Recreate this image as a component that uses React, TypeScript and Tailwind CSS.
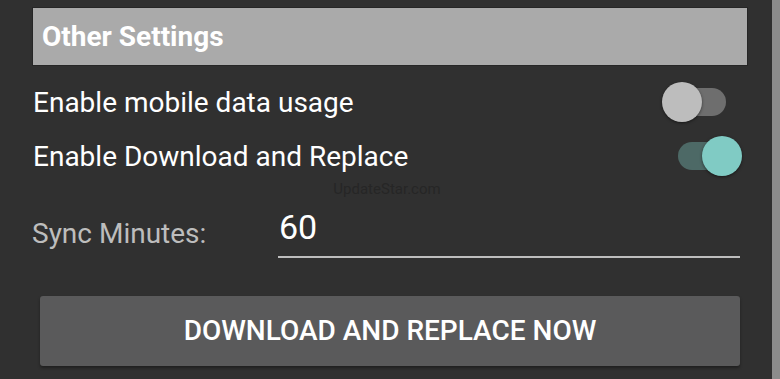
import React from 'react';

const Switch = ({ on }: { on: boolean }) => (
  <div className="relative w-[80px] h-[40px]">
    <div
      className={
        on
          ? 'absolute left-[16px] top-[6px] w-[48px] h-[28px] rounded-full bg-[#4d6966]'
          : 'absolute left-[16px] top-[6px] w-[48px] h-[28px] rounded-full bg-[#6e6e6e]'
      }
    />
    <div
      className={
        on
          ? 'absolute left-[40px] top-0 w-[40px] h-[40px] rounded-full bg-[#80cbc4] shadow-[0_1px_3px_rgba(0,0,0,0.5)]'
          : 'absolute left-0 top-0 w-[40px] h-[40px] rounded-full bg-[#bdbdbd] shadow-[0_1px_3px_rgba(0,0,0,0.5)]'
      }
    />
  </div>
);

const SettingRow = ({ label, on }: { label: string; on: boolean }) => (
  <div className="flex items-center justify-between h-[44px] pl-px pr-[6px]">
    <span className="text-[28px] text-white leading-none pt-[2px]">{label}</span>
    <Switch on={on} />
  </div>
);

export default function App() {
  return (
    <div
      className="flex w-[780px] h-[379px] bg-[#303030] overflow-hidden"
      style={{ fontFamily: 'Roboto, "Noto Sans", sans-serif' }}
    >
      <div className="flex-1 flex flex-col pl-[32px] pr-[24px]">
        <div className="mt-[7px] h-[59px] bg-[#aaaaaa] border border-[#262626] flex items-center pl-[9px]">
          <span className="text-[28px] font-bold text-white leading-none">Other Settings</span>
        </div>

        <div className="mt-[14px]">
          <SettingRow label="Enable mobile data usage" on={false} />
        </div>
        <div className="mt-[10px]">
          <SettingRow label="Enable Download and Replace" on={true} />
        </div>

        <div className="flex justify-center h-[18px] mt-[4px]">
          <span className="text-[15px] text-[#262626] leading-none pr-[6px]">UpdateStar.com</span>
        </div>

        <div className="flex items-end h-[58px] pr-[8px]">
          <span className="w-[246px] text-[28px] text-[#bdbdbd] leading-none pb-[10px]">Sync Minutes:</span>
          <div className="flex-1 border-b-2 border-[#bdbdbd] pb-[10px] pl-px">
            <span className="text-[34px] text-white leading-none">60</span>
          </div>
        </div>

        <button className="mt-[38px] ml-[8px] mr-[8px] h-[70px] rounded-[3px] bg-[#5a5a5b] shadow-[0_2px_3px_rgba(0,0,0,0.35)] flex items-center justify-center">
          <span className="text-[28px] font-medium text-white leading-none">DOWNLOAD AND REPLACE NOW</span>
        </button>
      </div>
      <div className="w-[8px] bg-[#8c8c8c]" />
    </div>
  );
}
